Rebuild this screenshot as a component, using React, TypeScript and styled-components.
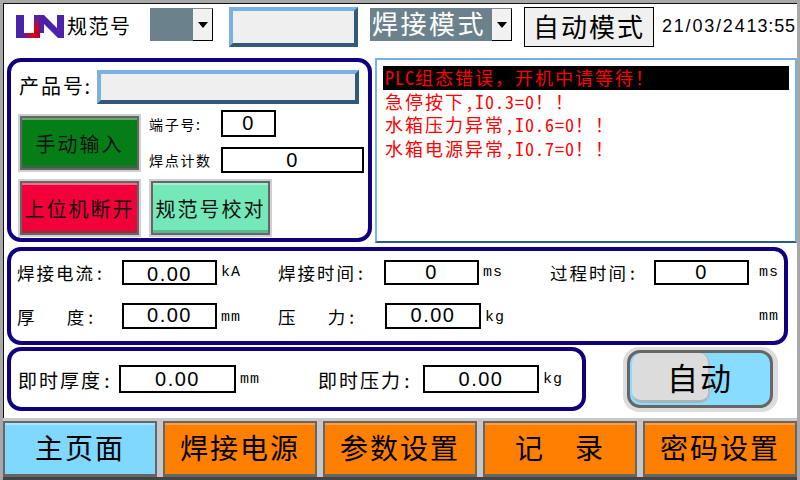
import React from "react";
import styled, { createGlobalStyle, css } from "styled-components";

const Global = createGlobalStyle`
  html, body { margin: 0; padding: 0; background: #fff; }
  body { font-family: "Noto Sans CJK SC", "Liberation Sans", sans-serif; color: #000; }
  * { box-sizing: border-box; }
`;

const FW_COMMA = "\uFF0C";
const FW_BANG = "\uFF01";
const FW_SPACE = "\u3000";
const EN_SPACE = "\u2002";

const Screen = styled.div`
  width: 800px;
  height: 480px;
  overflow: hidden;
  background: #fff;
  border-top: 3px solid #a8a8a8;
  border-left: 3px solid #a8a8a8;
  border-right: 3px solid #a8a8a8;
  display: flex;
  flex-direction: column;
  position: relative;
`;

const Inner = styled.div`
  flex: none;
  height: 415px;
  border-top: 1px solid #111;
  border-left: 1px solid #111;
  display: flex;
  flex-direction: column;
`;

const Header = styled.header`
  height: 54px;
  flex: none;
  display: flex;
  align-items: flex-start;
  padding-left: 12px;
`;

const Logo = styled.svg`
  width: 48px;
  height: 24px;
  margin-top: 11px;
  flex: none;
`;

const Title = styled.div`
  font-size: 20px;
  line-height: 24px;
  letter-spacing: 1.5px;
  margin: 10px 0 0 3px;
  width: 83px;
  flex: none;
`;

const Select = styled.div<{ $w: number; $ml: number }>`
  width: ${(p) => p.$w}px;
  margin: 4px 0 0 ${(p) => p.$ml}px;
  height: 33px;
  display: flex;
  flex: none;
`;

const SelectValue = styled.div`
  flex: 1;
  background: #6b828c;
  color: #fff;
  font-size: 26px;
  line-height: 30px;
  letter-spacing: 2.5px;
  white-space: nowrap;
  padding-left: 2px;
`;

const SelectArrow = styled.div`
  width: 20px;
  background: #f1f1f1;
  border: solid #000;
  border-width: 1px 1px 1px 0;
  border-top-color: #888;
  display: flex;
  align-items: center;
  justify-content: center;
  &::after {
    content: "";
    border-left: 5px solid transparent;
    border-right: 5px solid transparent;
    border-top: 6px solid #000;
  }
`;

const BevelField = styled.div<{ $w: number; $h: number; $ml?: number; $mt?: number }>`
  width: ${(p) => p.$w}px;
  height: ${(p) => p.$h}px;
  margin-left: ${(p) => p.$ml ?? 0}px;
  margin-top: ${(p) => p.$mt ?? 0}px;
  flex: none;
  background: #efefef;
  border: 4px solid;
  border-color: #7ab1e4 #2f5a78 #2f5a78 #7ab1e4;
`;

const ModeButton = styled.div`
  width: 130px;
  height: 40px;
  margin: 3px 0 0 12px;
  flex: none;
  background: #f0f0f0;
  border: 1px solid #000;
  font-size: 26px;
  line-height: 35px;
  letter-spacing: 2px;
  text-align: center;
`;

const Clock = styled.div`
  margin: 9px 0 0 8px;
  font-family: "Liberation Sans", sans-serif;
  font-size: 18px;
  line-height: 26px;
  white-space: nowrap;
  flex: none;
`;

const ClockPart = styled.span<{ $ls: number }>`
  letter-spacing: ${(p) => p.$ls}px;
`;

const TopRow = styled.div`
  display: flex;
  height: 185px;
  flex: none;
  padding-left: 3px;
`;

const Panel = styled.section<{ $w: number; $h: number; $r?: number }>`
  width: ${(p) => p.$w}px;
  height: ${(p) => p.$h}px;
  flex: none;
  border: 4px solid #10007f;
  border-radius: ${(p) => p.$r ?? 14}px;
`;

const ProductPanel = styled(Panel)`
  padding: 8px 0 0 7px;
  display: grid;
  grid-template-rows: 44px 1fr;
`;

const ProductRow = styled.div`
  display: flex;
  align-items: flex-start;
`;

const ProductLabel = styled.div`
  font-size: 20px;
  line-height: 32px;
  letter-spacing: 2px;
  word-spacing: -7px;
  width: 79px;
  padding-left: 1px;
  flex: none;
  white-space: pre;
`;

const Buttons = styled.div`
  display: grid;
  grid-template-columns: 131px 1fr;
  grid-template-rows: 65px 65px;
`;

const tones = {
  green: css`background: #067e18; box-shadow: 0 0 0 2px #cfcfcf, inset 0 2px 0 #66a76f, inset 0 -3px 0 #2e6b38;`,
  red: css`background: #f2003a; box-shadow: 0 0 0 2px #cfcfcf, inset 0 2px 0 #f46a85, inset 0 -3px 0 #b0203c;`,
  teal: css`background: #74e8b8; box-shadow: 0 0 0 2px #cfcfcf, inset 0 2px 0 #a6f0d2, inset 0 -3px 0 #5cb894;`,
};

const HmiButton = styled.button<{ $tone: keyof typeof tones }>`
  width: 119px;
  height: 54px;
  padding: 0;
  margin: 2px;
  font-family: inherit;
  font-size: 20px;
  letter-spacing: 2px;
  color: #111;
  border: 2px solid #666;
  white-space: nowrap;
  ${(p) => tones[p.$tone]}
`;

const SideFields = styled.div`
  display: grid;
  grid-template-columns: 72px auto;
  grid-template-rows: 27px 26px;
  row-gap: 10px;
  margin-top: -4px;
  justify-content: start;
  align-items: center;
  align-content: start;
`;

const Small = styled.div`
  font-size: 14px;
  letter-spacing: 1.7px;
  word-spacing: -5px;
  line-height: 20px;
  white-space: pre;
`;

const Value = styled.div<{ $w: number; $h?: number; $dy?: number }>`
  width: ${(p) => p.$w}px;
  height: ${(p) => p.$h ?? 26}px;
  flex: none;
  border: 2px solid #000;
  background: #fff;
  font-family: "Liberation Sans", sans-serif;
  font-size: 20px;
  letter-spacing: 1.5px;
  line-height: ${(p) => (p.$h ?? 26) - 4 + 2 * (p.$dy ?? 0)}px;
  text-align: center;
`;

const Messages = styled.div`
  width: 422px;
  height: 185px;
  margin-left: 3px;
  flex: none;
  border: 2px solid;
  border-color: #7ab1e4 #7ab1e4 #2f5a78 #7ab1e4;
  padding: 6px 6px 0 6px;
`;

const Message = styled.div<{ $active?: boolean }>`
  height: 23.5px;
  font-size: 18px;
  line-height: 23px;
  letter-spacing: 2px;
  color: #ff0000;
  white-space: nowrap;
  padding-left: 2px;
  background: ${(p) => (p.$active ? "#000" : "transparent")};
`;

const Latin = styled.span`
  font-feature-settings: "hwid";
  font-size: 18px;
  letter-spacing: 1px;
  line-height: 1;
`;

const ParamPanel = styled(Panel)`
  margin: 4px 0 0 3px;
  display: grid;
  grid-template-columns: 261px 272px 1fr;
  grid-template-rows: 42px 46px;
  padding-left: 6px;
`;

const Param = styled.div`
  display: flex;
  align-items: center;
  white-space: nowrap;
`;

const ParamLabel = styled.div<{ $w: number }>`
  width: ${(p) => p.$w}px;
  font-size: 17.5px;
  letter-spacing: 2px;
  word-spacing: -4px;
  white-space: pre;
  flex: none;
`;

const Unit = styled.div<{ $ml?: number; $dy?: number }>`
  font-family: "Liberation Mono", monospace;
  font-size: 15px;
  letter-spacing: 1px;
  margin-left: ${(p) => p.$ml ?? 4}px;
  margin-top: ${(p) => p.$dy ?? 0}px;
`;

const BottomRow = styled.div`
  display: flex;
  margin: 2px 0 0 3px;
  align-items: flex-start;
`;

const LivePanel = styled(Panel)`
  display: flex;
  align-items: center;
  padding-left: 7px;
`;

const LiveLabel = styled.div<{ $w: number; $ml?: number }>`
  width: ${(p) => p.$w}px;
  margin-left: ${(p) => p.$ml ?? 0}px;
  font-size: 19px;
  letter-spacing: 2px;
  word-spacing: -4px;
  white-space: pre;
  flex: none;
`;

const LiveUnit = styled(Unit)`
  width: 20px;
  flex: none;
`;

const Toggle = styled.div`
  width: 155px;
  height: 65px;
  margin-left: 37px;
  flex: none;
  border-radius: 16px;
  background: #dcdcdc;
  padding: 3px 5px 4px 4px;
`;

const ToggleTrack = styled.div`
  width: 100%;
  height: 100%;
  background: #87dcff;
  border: 3px solid #666;
  border-radius: 13px;
  position: relative;
  padding: 0 2px;
  display: flex;
`;

const Knob = styled.div`
  width: 78px;
  height: 50px;
  background: #dcdcdc;
  border-bottom: 3px solid #a9b4b8;
  border-right: 2px solid #b8bcbe;
  border-radius: 10px;
`;

const ToggleText = styled.div`
  position: absolute;
  inset: 0;
  display: flex;
  align-items: center;
  justify-content: center;
  font-size: 31px;
  letter-spacing: 2px;
  padding-bottom: 5px;
`;

const Nav = styled.nav`
  position: absolute;
  left: -3px;
  right: -3px;
  bottom: 0;
  height: 62px;
  background: #c8c8c8;
  border-bottom: 3px solid #444;
  display: flex;
  padding: 3px 3px 0 3px;
  gap: 6px;
`;

const NavItem = styled.div<{ $active?: boolean }>`
  width: 154px;
  flex: none;
  height: 56px;
  border: 2px solid #666;
  border-bottom-width: 3px;
  background: ${(p) => (p.$active ? "#80d8ff" : "#ff8000")};
  box-shadow: inset 0 2px 0 ${(p) => (p.$active ? "#a8e6ff" : "#ffa040")};
  font-size: 28px;
  line-height: 49px;
  letter-spacing: 2px;
  text-align: center;
  white-space: pre;
`;

export default function App() {
  return (
    <Screen>
      <Global />
      <Inner>
        <Header>
          <Logo viewBox="0 0 48 24">
            <defs>
              <linearGradient id="redL" x1="0" x2="1" y1="0" y2="0">
                <stop offset="0" stopColor="#4a23a8" />
                <stop offset="0.55" stopColor="#e80010" />
                <stop offset="1" stopColor="#a00040" />
              </linearGradient>
              <linearGradient id="redN" x1="0" x2="0" y1="0" y2="1">
                <stop offset="0" stopColor="#4a23a8" />
                <stop offset="0.75" stopColor="#e00010" />
                <stop offset="1" stopColor="#c00020" />
              </linearGradient>
            </defs>
            <path d="M0 0h8v18h6v5H0z" fill="#4a23a8" />
            <path d="M7 18h17v5H7z" fill="url(#redL)" />
            <path d="M18 0h6v19h-6z" fill="url(#redN)" />
            <path d="M22 0h6l13 13V0h7v23h-6L28 9v9h-5V0z" fill="#4a23a8" />
          </Logo>
          <Title>规范号</Title>
          <Select $w={63} $ml={0}>
            <SelectValue />
            <SelectArrow />
          </Select>
          <BevelField $w={129} $h={40} $ml={16} $mt={3} />
          <Select $w={142} $ml={12}>
            <SelectValue>焊接模式</SelectValue>
            <SelectArrow />
          </Select>
          <ModeButton>自动模式</ModeButton>
          <Clock>
            <ClockPart $ls={1.8}>21/03/24</ClockPart>
            <ClockPart $ls={0.9}>13:55</ClockPart>
          </Clock>
        </Header>
        <TopRow>
          <ProductPanel $w={365} $h={184}>
            <ProductRow>
              <ProductLabel>产品号 :</ProductLabel>
              <BevelField $w={262} $h={34} />
            </ProductRow>
            <Buttons>
              <HmiButton $tone="green">手动输入</HmiButton>
              <SideFields>
                <Small>端子号 :</Small>
                <Value $w={55} $h={27}>0</Value>
                <Small>焊点计数</Small>
                <Value $w={143}>0</Value>
              </SideFields>
              <HmiButton $tone="red">上位机断开</HmiButton>
              <HmiButton $tone="teal">规范号校对</HmiButton>
            </Buttons>
          </ProductPanel>
          <Messages>
            <Message $active><Latin>PLC</Latin>组态错误{FW_COMMA}开机中请等待{FW_BANG}</Message>
            <Message>急停按下<Latin>,I0.3=0</Latin>{FW_BANG}{FW_BANG}</Message>
            <Message>水箱压力异常<Latin>,I0.6=0</Latin>{FW_BANG}{FW_BANG}</Message>
            <Message>水箱电源异常<Latin>,I0.7=0</Latin>{FW_BANG}{FW_BANG}</Message>
          </Messages>
        </TopRow>
        <ParamPanel $w={781} $h={98}>
          <Param>
            <ParamLabel $w={105}>焊接电流 :</ParamLabel>
            <Value $w={95} $h={25} $dy={2}>0.00</Value>
            <Unit>kA</Unit>
          </Param>
          <Param>
            <ParamLabel $w={106}>焊接时间 :</ParamLabel>
            <Value $w={95} $h={25}>0</Value>
            <Unit>ms</Unit>
          </Param>
          <Param>
            <ParamLabel $w={104}>过程时间 :</ParamLabel>
            <Value $w={95} $h={25}>0</Value>
            <Unit $ml={10}>ms</Unit>
          </Param>
          <Param>
            <ParamLabel $w={105}>厚{FW_SPACE}{EN_SPACE}度 :</ParamLabel>
            <Value $w={95} $dy={-1}>0.00</Value>
            <Unit $dy={2}>mm</Unit>
          </Param>
          <Param>
            <ParamLabel $w={107}>压{FW_SPACE}{EN_SPACE}力 :</ParamLabel>
            <Value $w={96} $dy={-1}>0.00</Value>
            <Unit $dy={2}>kg</Unit>
          </Param>
          <Param>
            <ParamLabel $w={199} />
            <Unit $ml={10}>mm</Unit>
          </Param>
        </ParamPanel>
        <BottomRow>
          <LivePanel $w={579} $h={64}>
            <LiveLabel $w={101}>即时厚度 :</LiveLabel>
            <Value $w={117} $h={28}>0.00</Value>
            <LiveUnit>mm</LiveUnit>
            <LiveLabel $w={105} $ml={58}>即时压力 :</LiveLabel>
            <Value $w={116} $h={28}>0.00</Value>
            <LiveUnit>kg</LiveUnit>
          </LivePanel>
          <Toggle>
            <ToggleTrack>
              <Knob />
              <ToggleText>自动</ToggleText>
            </ToggleTrack>
          </Toggle>
        </BottomRow>
      </Inner>
      <Nav>
        <NavItem $active>主页面</NavItem>
        <NavItem>焊接电源</NavItem>
        <NavItem>参数设置</NavItem>
        <NavItem>记{FW_SPACE}录</NavItem>
        <NavItem>密码设置</NavItem>
      </Nav>
    </Screen>
  );
}
